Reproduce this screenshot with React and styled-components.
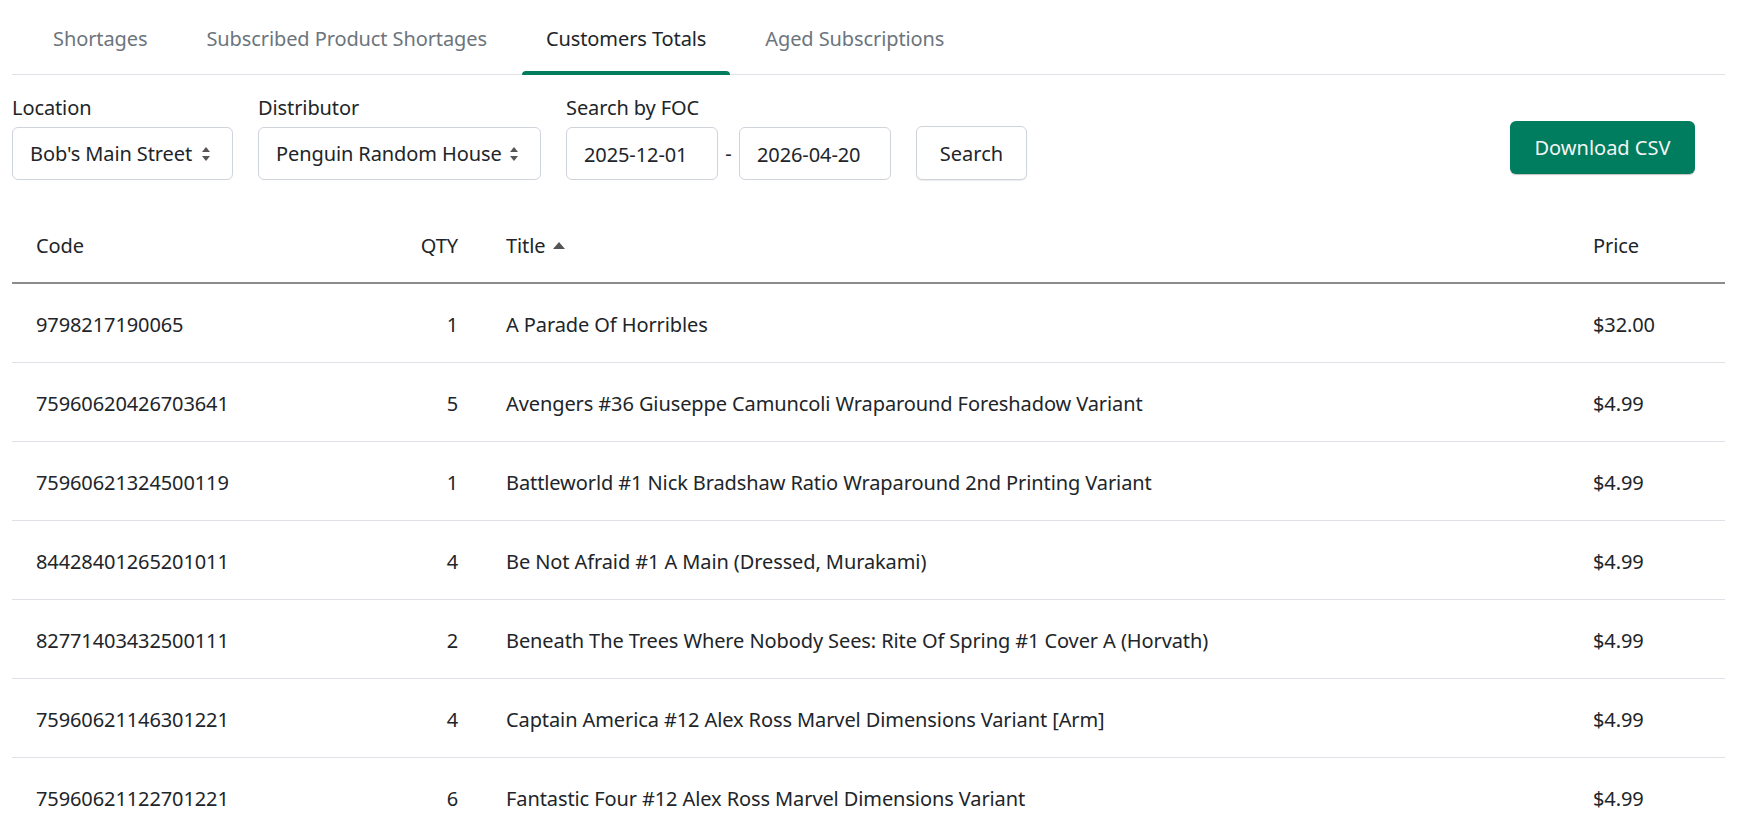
import React from "react";
import styled, { createGlobalStyle } from "styled-components";

const GlobalStyle = createGlobalStyle`
  html, body {
    margin: 0;
    padding: 0;
    overflow: hidden;
    background: #fff;
  }
  body {
    font-family: "Noto Sans", "Open Sans", Arial, sans-serif;
    font-size: 20px;
    line-height: 30px;
    letter-spacing: -0.1px;
    color: #212529;
  }
`;

const rows = [
  { code: "9798217190065", qty: 1, title: "A Parade Of Horribles", price: "$32.00" },
  { code: "75960620426703641", qty: 5, title: "Avengers #36 Giuseppe Camuncoli Wraparound Foreshadow Variant", price: "$4.99" },
  { code: "75960621324500119", qty: 1, title: "Battleworld #1 Nick Bradshaw Ratio Wraparound 2nd Printing Variant", price: "$4.99" },
  { code: "84428401265201011", qty: 4, title: "Be Not Afraid #1 A Main (Dressed, Murakami)", price: "$4.99" },
  { code: "82771403432500111", qty: 2, title: "Beneath The Trees Where Nobody Sees: Rite Of Spring #1 Cover A (Horvath)", price: "$4.99" },
  { code: "75960621146301221", qty: 4, title: "Captain America #12 Alex Ross Marvel Dimensions Variant [Arm]", price: "$4.99" },
  { code: "75960621122701221", qty: 6, title: "Fantastic Four #12 Alex Ross Marvel Dimensions Variant", price: "$4.99" },
];

const tabs = ["Shortages", "Subscribed Product Shortages", "Customers Totals", "Aged Subscriptions"];

export default function App() {
  return (
    <Page>
      <GlobalStyle />
      <TabBar>
        {tabs.map((t) => (
          <Tab key={t} active={t === "Customers Totals"}>
            {t}
          </Tab>
        ))}
      </TabBar>

      <Filters>
        <Field>
          <Label>Location</Label>
          <Select width={221}>
            Bob's Main Street
            <Arrows />
          </Select>
        </Field>
        <Field>
          <Label>Distributor</Label>
          <Select width={283}>
            Penguin Random House
            <Arrows />
          </Select>
        </Field>
        <Field>
          <Label>Search by FOC</Label>
          <DateRange>
            <DateBox>2025-12-01</DateBox>
            <Dash>-</Dash>
            <DateBox>2026-04-20</DateBox>
          </DateRange>
        </Field>
        <SearchButton>Search</SearchButton>
        <Spacer />
        <DownloadButton>Download CSV</DownloadButton>
      </Filters>

      <Table>
        <colgroup>
          <col style={{ width: 368 }} />
          <col style={{ width: 102 }} />
          <col />
          <col style={{ width: 156 }} />
        </colgroup>
        <thead>
          <tr>
            <Th>Code</Th>
            <Th align="right">QTY</Th>
            <Th>
              Title
              <SortUp viewBox="0 0 12 7">
                <path d="M6 0 L12 7 L0 7 Z" fill="#555" />
              </SortUp>
            </Th>
            <Th>Price</Th>
          </tr>
        </thead>
        <tbody>
          {rows.map((r) => (
            <tr key={r.code}>
              <Td>{r.code}</Td>
              <Td align="right">{r.qty}</Td>
              <Td>{r.title}</Td>
              <Td>{r.price}</Td>
            </tr>
          ))}
        </tbody>
      </Table>
    </Page>
  );
}

function Arrows() {
  return (
    <ArrowIcon viewBox="0 0 8 14">
      <path d="M4 0 L8 5 L0 5 Z" fill="#555" />
      <path d="M4 14 L8 9 L0 9 Z" fill="#555" />
    </ArrowIcon>
  );
}

const Page = styled.div`
  padding: 0 18px 0 12px;
`;

const TabBar = styled.nav`
  display: flex;
  gap: 11px;
  padding-left: 17px;
  border-bottom: 1px solid #dee2e6;
`;

const Tab = styled.div`
  position: relative;
  padding: 24px 24px 21px;
  margin-bottom: -1px;
  color: ${(p) => (p.active ? "#212529" : "#6c757d")};
  white-space: nowrap;
  &::after {
    content: "";
    display: ${(p) => (p.active ? "block" : "none")};
    position: absolute;
    left: 0;
    right: 0;
    bottom: 0;
    height: 4px;
    border-radius: 4px 4px 0 0;
    background: #007d5e;
  }
`;

const Filters = styled.div`
  display: flex;
  align-items: flex-end;
  gap: 25px;
  padding-top: 18px;
  padding-right: 30px;
`;

const Field = styled.div`
  display: flex;
  flex-direction: column;
`;

const Label = styled.label`
  margin-bottom: 4px;
`;

const Select = styled.div`
  box-sizing: border-box;
  width: ${(p) => p.width}px;
  height: 53px;
  display: flex;
  align-items: center;
  justify-content: space-between;
  padding: 1px 22px 0 17px;
  border: 1px solid #ced4da;
  border-radius: 6px;
  white-space: nowrap;
`;

const ArrowIcon = styled.svg`
  width: 8px;
  height: 14px;
  flex: none;
`;

const DateRange = styled.div`
  display: flex;
  align-items: center;
`;

const DateBox = styled.div`
  box-sizing: border-box;
  width: 152px;
  height: 53px;
  display: flex;
  align-items: center;
  padding: 2px 17px 0;
  border: 1px solid #ced4da;
  border-radius: 6px;
`;

const Dash = styled.span`
  width: 21px;
  text-align: center;
`;

const SearchButton = styled.button`
  box-sizing: border-box;
  width: 111px;
  height: 54px;
  padding-top: 3px;
  font: inherit;
  color: #212529;
  background: #fff;
  border: 1px solid #ced4da;
  border-radius: 6px;
  box-shadow: 0 1px 1px rgba(0, 0, 0, 0.08);
`;

const Spacer = styled.div`
  flex: 1;
`;

const DownloadButton = styled.button`
  box-sizing: border-box;
  width: 185px;
  height: 53px;
  margin-bottom: 6px;
  padding-top: 2px;
  font: inherit;
  color: #f4f4f4;
  background: #007d5e;
  border: none;
  border-radius: 6px;
  box-shadow: 0 1px 1px rgba(0, 0, 0, 0.25);
`;

const Table = styled.table`
  width: 100%;
  margin-top: 26px;
  border-collapse: collapse;
  table-layout: fixed;
`;

const Th = styled.th`
  padding: 25px 24px 21px;
  font-weight: 400;
  text-align: ${(p) => p.align || "left"};
  border-bottom: 2px solid #8c8c8c;
  white-space: nowrap;
`;

const SortUp = styled.svg`
  width: 12px;
  height: 7px;
  margin-left: 8px;
  vertical-align: 4px;
`;

const Td = styled.td`
  padding: 26px 24px 22px;
  text-align: ${(p) => p.align || "left"};
  border-bottom: 1px solid #dee2e6;
  white-space: nowrap;
`;
